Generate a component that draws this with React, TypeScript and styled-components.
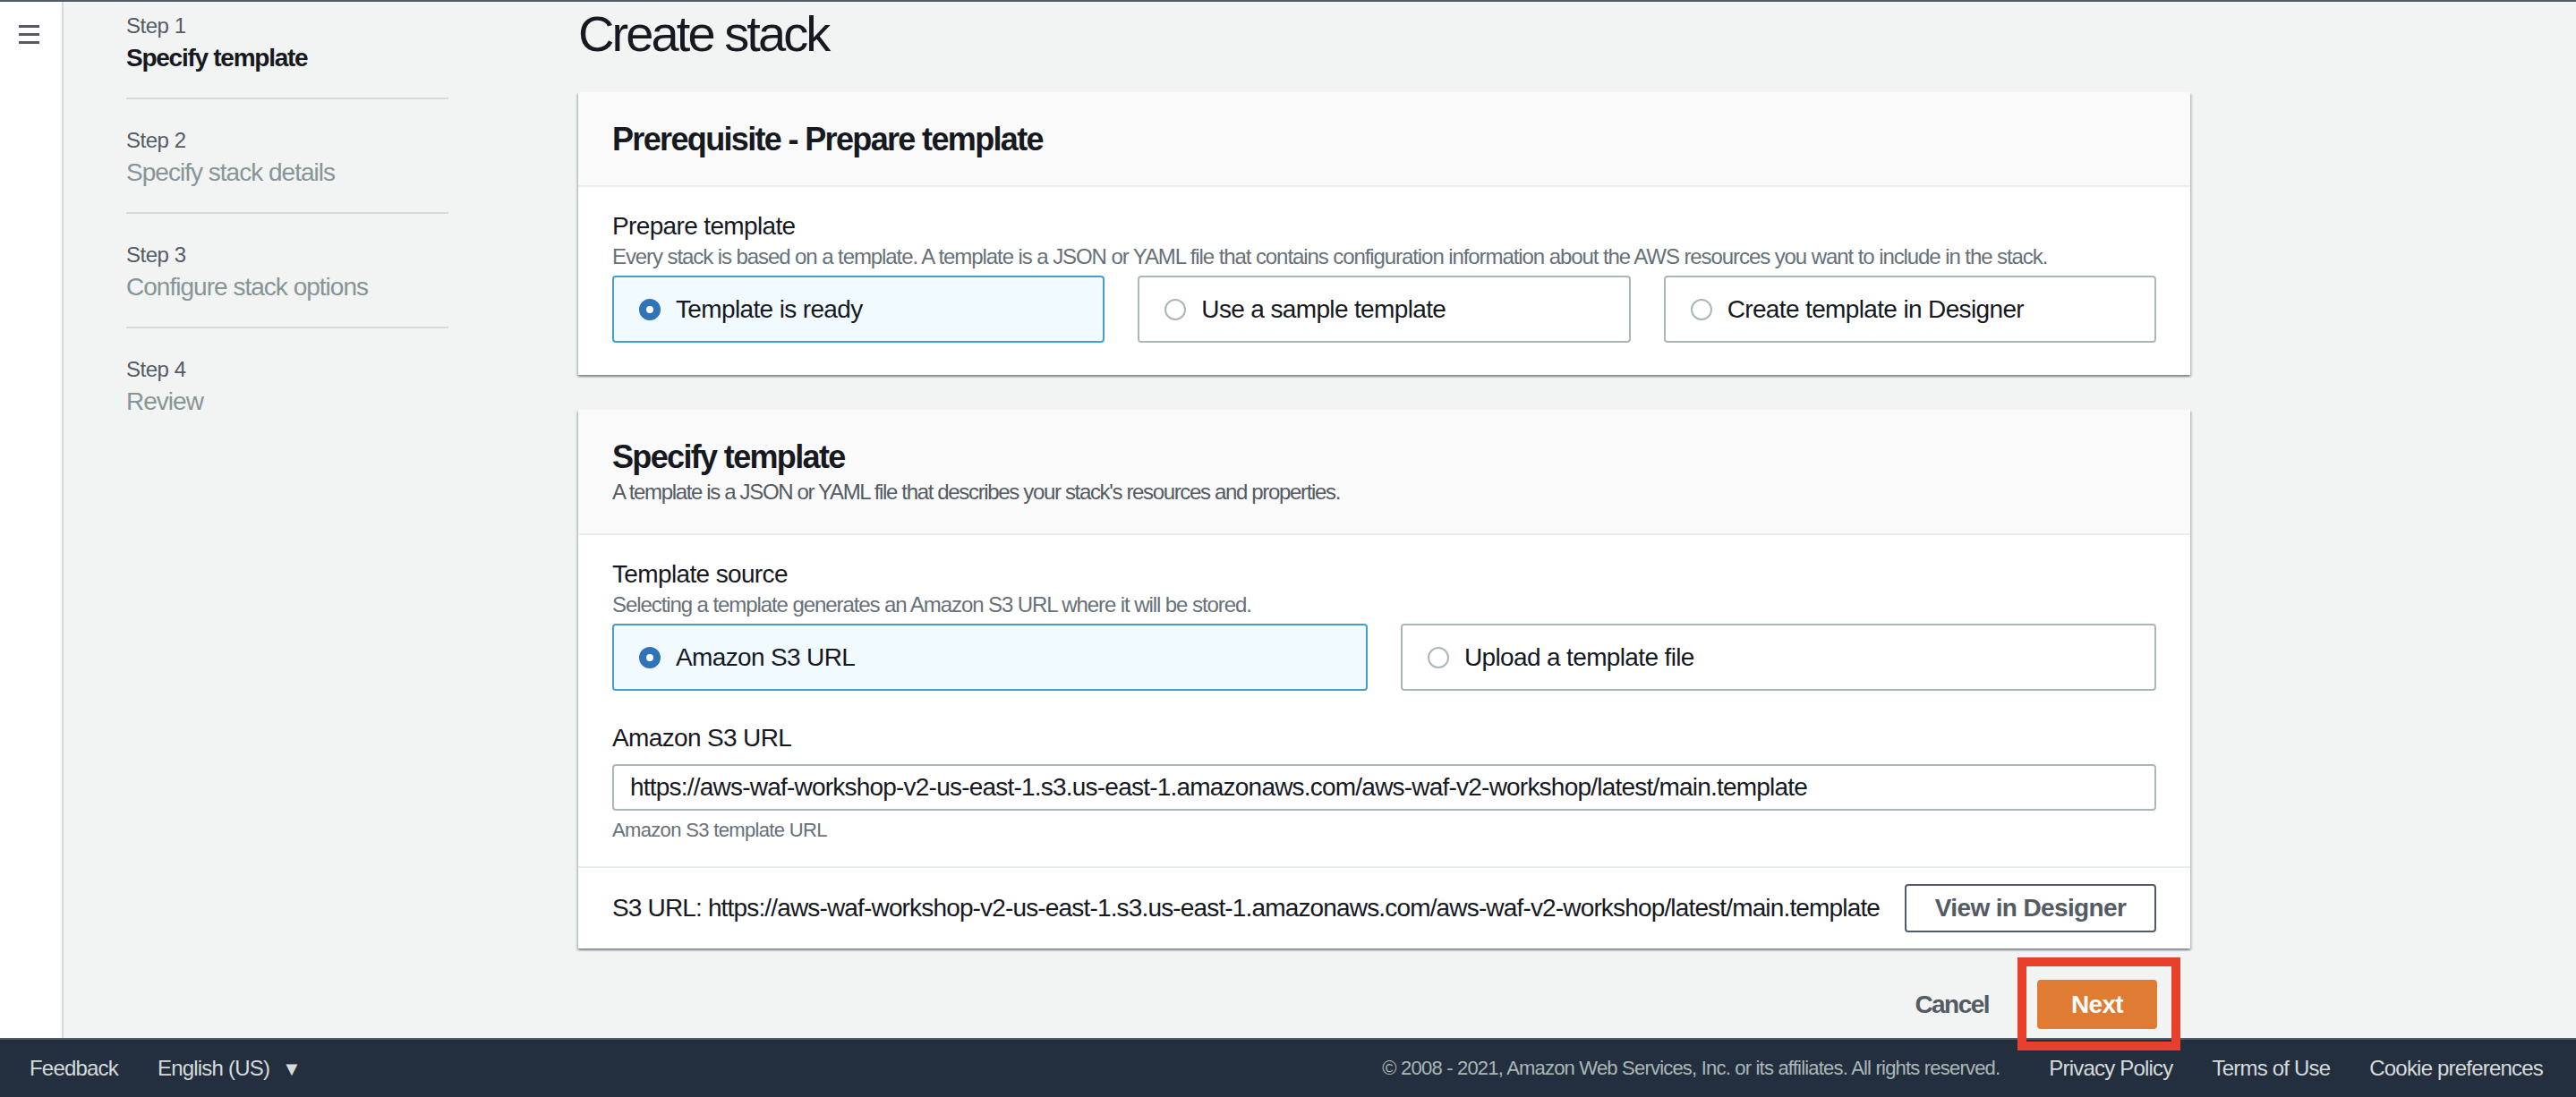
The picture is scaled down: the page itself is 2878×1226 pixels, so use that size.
import styled, { createGlobalStyle } from 'styled-components'

const font = `"Liberation Sans", Arial, sans-serif`

const GlobalStyle = createGlobalStyle`
  html, body { margin: 0; padding: 0; }
  body { background: #f2f3f3; font-family: ${font}; color: #16191f; letter-spacing: -0.04em; }
  * { box-sizing: border-box; }
  button, input { letter-spacing: inherit; }
`

const steps = [
  { label: 'Step 1', title: 'Specify template', active: true },
  { label: 'Step 2', title: 'Specify stack details' },
  { label: 'Step 3', title: 'Configure stack options' },
  { label: 'Step 4', title: 'Review' },
]

const S3_URL = 'https://aws-waf-workshop-v2-us-east-1.s3.us-east-1.amazonaws.com/aws-waf-v2-workshop/latest/main.template'

export default function App() {
  return (
    <>
      <GlobalStyle />
      <Page>
        <Body>
          <NavStrip>
            <svg width="23" height="21" viewBox="0 0 23 21">
              <rect x="0" y="0" width="23" height="3" fill="#545b64" />
              <rect x="0" y="9" width="23" height="3" fill="#545b64" />
              <rect x="0" y="18" width="23" height="3" fill="#545b64" />
            </svg>
          </NavStrip>
          <Content>
            <Steps>
              {steps.map((s, i) => (
                <Step key={s.label} last={i === steps.length - 1}>
                  <StepLabel>{s.label}</StepLabel>
                  <StepTitle active={s.active}>{s.title}</StepTitle>
                </Step>
              ))}
            </Steps>

            <Main>
              <PageTitle>Create stack</PageTitle>

              <Card>
                <CardHeader>
                  <CardTitle>Prerequisite - Prepare template</CardTitle>
                </CardHeader>
                <CardBody>
                  <FieldLabel>Prepare template</FieldLabel>
                  <FieldDesc>Every stack is based on a template. A template is a JSON or YAML file that contains configuration information about the AWS resources you want to include in the stack.</FieldDesc>
                  <Tiles cols={3}>
                    <Tile selected><Radio selected />Template is ready</Tile>
                    <Tile><Radio />Use a sample template</Tile>
                    <Tile><Radio />Create template in Designer</Tile>
                  </Tiles>
                </CardBody>
              </Card>

              <Card>
                <CardHeader>
                  <CardTitle>Specify template</CardTitle>
                  <HeaderDesc>A template is a JSON or YAML file that describes your stack's resources and properties.</HeaderDesc>
                </CardHeader>
                <CardBody tight>
                  <FieldLabel>Template source</FieldLabel>
                  <FieldDesc>Selecting a template generates an Amazon S3 URL where it will be stored.</FieldDesc>
                  <Tiles cols={2}>
                    <Tile selected><Radio selected />Amazon S3 URL</Tile>
                    <Tile><Radio />Upload a template file</Tile>
                  </Tiles>
                  <FieldLabel spaced>Amazon S3 URL</FieldLabel>
                  <UrlInput readOnly value={S3_URL} />
                  <Hint>Amazon S3 template URL</Hint>
                </CardBody>
                <CardFooter>
                  <UrlText>S3 URL: {S3_URL}</UrlText>
                  <OutlineButton>View in Designer</OutlineButton>
                </CardFooter>
              </Card>

              <Actions>
                <LinkButton>Cancel</LinkButton>
                <NextWrap>
                  <PrimaryButton>Next</PrimaryButton>
                  <Highlight />
                </NextWrap>
              </Actions>
            </Main>
          </Content>
        </Body>

        <Footer>
          <FooterGroup>
            <FooterLink>Feedback</FooterLink>
            <FooterLink>English (US) <Caret>▼</Caret></FooterLink>
          </FooterGroup>
          <FooterGroup>
            <Copyright>© 2008 - 2021, Amazon Web Services, Inc. or its affiliates. All rights reserved.</Copyright>
            <FooterLink>Privacy Policy</FooterLink>
            <FooterLink>Terms of Use</FooterLink>
            <FooterLink>Cookie preferences</FooterLink>
          </FooterGroup>
        </Footer>
      </Page>
    </>
  )
}

const Page = styled.div`
  height: 1226px;
  display: flex;
  flex-direction: column;
  border-top: 2px solid #545b64;
  overflow: hidden;
`

const Body = styled.div`
  flex: 1;
  display: flex;
  min-height: 0;
`

const NavStrip = styled.div`
  width: 71px;
  flex-shrink: 0;
  background: #fff;
  border-right: 2px solid #d5dbdb;
  padding: 26px 0 0 21px;
`

const Content = styled.div`
  flex: 1;
  display: grid;
  grid-template-columns: 575px 1801px;
  align-items: start;
`

const Steps = styled.div`
  padding: 11px 0 0 70px;
  width: 430px;
`

const Step = styled.div<{ last?: boolean }>`
  padding-bottom: 24px;
  margin-bottom: 30px;
  border-bottom: 2px solid ${p => (p.last ? 'transparent' : '#d5dbdb')};
`

const StepLabel = styled.div`
  font-size: 24px;
  line-height: 32px;
  color: #545b64;
  letter-spacing: -0.02em;
`

const StepTitle = styled.div<{ active?: boolean }>`
  font-size: 28px;
  line-height: 40px;
  font-weight: ${p => (p.active ? 700 : 400)};
  color: ${p => (p.active ? '#16191f' : '#879596')};
  letter-spacing: ${p => (p.active ? '-0.045em' : '-0.035em')};
`

const Main = styled.div`
  display: flex;
  flex-direction: column;
`

const PageTitle = styled.h1`
  margin: 4px 0 33px;
  font-size: 56px;
  line-height: 64px;
  font-weight: 400;
  color: #16191f;
  letter-spacing: -0.052em;
`

const Card = styled.section`
  background: #fff;
  box-shadow: 0 2px 2px 0 rgba(0, 28, 36, 0.3), 2px 2px 2px 0 rgba(0, 28, 36, 0.15), -2px 2px 2px 0 rgba(0, 28, 36, 0.15);
  margin-bottom: 39px;
  &:last-of-type { margin-bottom: 0; }
`

const CardHeader = styled.div`
  background: #fafafa;
  border-bottom: 2px solid #eaeded;
  padding: 31px 38px 29px;
`

const CardTitle = styled.h2`
  margin: 0;
  font-size: 36px;
  line-height: 44px;
  font-weight: 700;
  letter-spacing: -0.046em;
`

const HeaderDesc = styled.div`
  font-size: 24px;
  line-height: 34px;
  color: #545b64;
  letter-spacing: -0.056em;
`

const CardBody = styled.div<{ tight?: boolean }>`
  padding: 24px 38px ${p => (p.tight ? '26px' : '36px')};
`

const FieldLabel = styled.div<{ spaced?: boolean }>`
  font-size: 28px;
  line-height: 40px;
  margin-top: ${p => (p.spaced ? '33px' : '0')};
`

const FieldDesc = styled.div`
  font-size: 24px;
  line-height: 28px;
  color: #687078;
  letter-spacing: -0.045em;
`

const Tiles = styled.div<{ cols: number }>`
  display: grid;
  grid-template-columns: repeat(${p => p.cols}, 1fr);
  gap: 37px;
  margin-top: 7px;
`

const Tile = styled.div<{ selected?: boolean }>`
  height: 75px;
  display: flex;
  align-items: center;
  gap: 17px;
  padding-left: 28px;
  font-size: 28px;
  border: 2px solid ${p => (p.selected ? '#44a0c9' : '#aab7b8')};
  background: ${p => (p.selected ? '#f1faff' : '#fff')};
  border-radius: 4px;
`

const Radio = styled.span<{ selected?: boolean }>`
  width: 24px;
  height: 24px;
  border-radius: 50%;
  flex-shrink: 0;
  background: #fff;
  border: ${p => (p.selected ? '8px solid #2f73b8' : '2px solid #aab7b8')};
`

const UrlInput = styled.input`
  display: block;
  width: 100%;
  height: 52px;
  margin-top: 9px;
  padding: 0 18px;
  border: 2px solid #aab7b8;
  border-radius: 4px;
  font-family: ${font};
  font-size: 28px;
  letter-spacing: -0.028em;
  color: #16191f;
  outline: none;
`

const Hint = styled.div`
  margin-top: 8px;
  font-size: 22px;
  line-height: 28px;
  color: #687078;
  letter-spacing: -0.03em;
`

const CardFooter = styled.div`
  border-top: 2px solid #eaeded;
  padding: 18px 38px 18px;
  display: flex;
  align-items: center;
  justify-content: space-between;
`

const UrlText = styled.div`
  font-size: 28px;
  color: #16191f;
  letter-spacing: -0.03em;
  white-space: pre;
`

const OutlineButton = styled.button`
  width: 281px;
  height: 54px;
  border: 2px solid #545b64;
  border-radius: 4px;
  background: #fff;
  font-family: ${font};
  font-size: 28px;
  font-weight: 700;
  color: #545b64;
`

const Actions = styled.div`
  display: flex;
  justify-content: flex-end;
  align-items: center;
  gap: 54px;
  margin-top: 35px;
  padding-right: 37px;
`

const LinkButton = styled.button`
  border: none;
  background: transparent;
  padding: 0;
  height: 55px;
  font-family: ${font};
  font-size: 28px;
  font-weight: 700;
  letter-spacing: -0.055em;
  color: #545b64;
`

const NextWrap = styled.div`
  position: relative;
  display: flex;
`

const PrimaryButton = styled.button`
  width: 134px;
  height: 55px;
  border: none;
  border-radius: 4px;
  background: #df7b32;
  font-family: ${font};
  font-size: 28px;
  font-weight: 700;
  color: #fff;
`

const Highlight = styled.div`
  position: absolute;
  left: -22px;
  right: -26px;
  top: -25px;
  bottom: -24px;
  border: 10px solid #e8402a;
  pointer-events: none;
`

const Footer = styled.footer`
  height: 66px;
  flex-shrink: 0;
  background: #232f3e;
  border-top: 2px solid #545b64;
  display: flex;
  align-items: center;
  justify-content: space-between;
  padding: 0 37px 0 33px;
  letter-spacing: -0.05em;
`

const FooterGroup = styled.div`
  display: flex;
  align-items: center;
  gap: 44px;
`

const FooterLink = styled.span`
  font-size: 24px;
  color: #d5dbdb;
`

const Caret = styled.span`
  font-size: 22px;
  margin-left: 8px;
`

const Copyright = styled.span`
  font-size: 22px;
  color: #aab7b8;
  margin-right: 11px;
`
